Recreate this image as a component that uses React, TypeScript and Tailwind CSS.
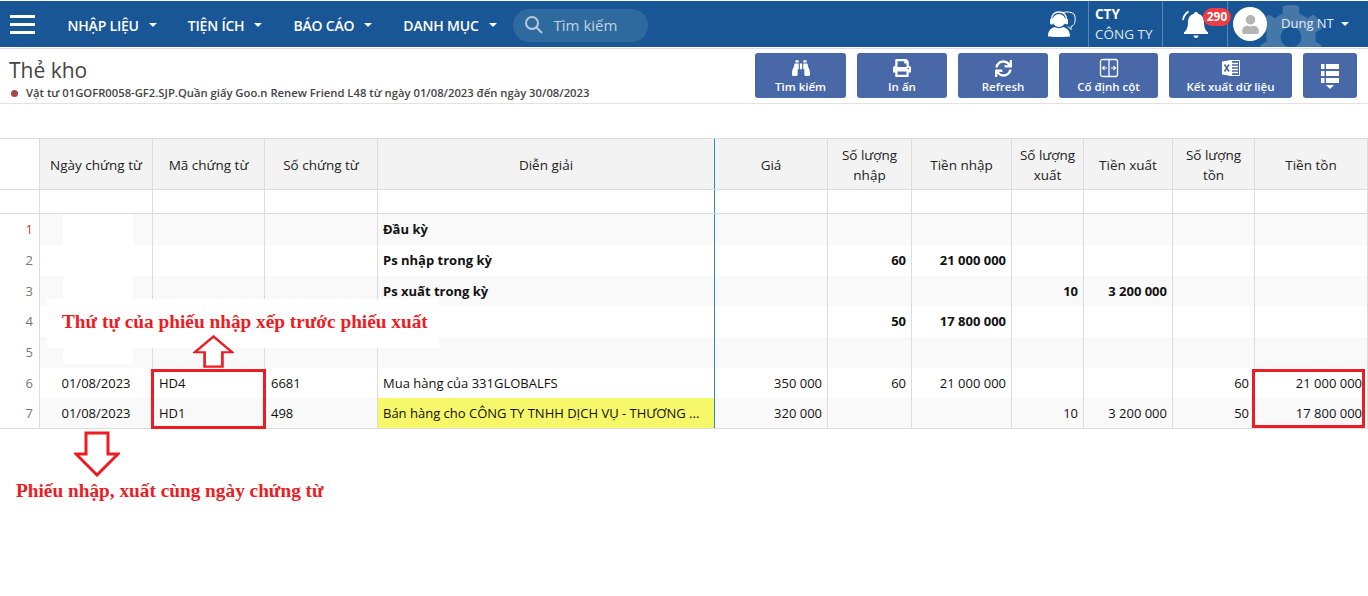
import { FaBinoculars, FaPrint, FaSync, FaCog, FaUser } from "react-icons/fa";

const COLS =
  "grid grid-cols-[40px_113px_112px_113px_337px_113px_84px_100px_72px_89px_82px_113px]";

const NAV = ["NHẬP LIỆU", "TIỆN ÍCH", "BÁO CÁO", "DANH MỤC"];

const ACTIONS = [
  { label: "Tìm kiếm", icon: <FaBinoculars size={18} />, w: "w-[91px]" },
  { label: "In ấn", icon: <FaPrint size={18} />, w: "w-[90px]" },
  { label: "Refresh", icon: <FaSync size={17} />, w: "w-[90px]" },
  { label: "Cố định cột", icon: <ColumnsIcon />, w: "w-[99px]" },
  { label: "Kết xuất dữ liệu", icon: <ExcelIcon />, w: "w-[123px]" },
];

const HEADERS = [
  "",
  "Ngày chứng từ",
  "Mã chứng từ",
  "Số chứng từ",
  "Diễn giải",
  "Giá",
  "Số lượng nhập",
  "Tiền nhập",
  "Số lượng xuất",
  "Tiền xuất",
  "Số lượng tồn",
  "Tiền tồn",
];

type Row = { h: string; bold?: boolean; cells: string[] };

const ROWS: Row[] = [
  { h: "h-[31px]", bold: true, cells: ["", "", "", "Đầu kỳ", "", "", "", "", "", "", ""] },
  { h: "h-[31px]", bold: true, cells: ["", "", "", "Ps nhập trong kỳ", "", "60", "21 000 000", "", "", "", ""] },
  { h: "h-[30px]", bold: true, cells: ["", "", "", "Ps xuất trong kỳ", "", "", "", "10", "3 200 000", "", ""] },
  { h: "h-[31px]", bold: true, cells: ["", "", "", "", "", "50", "17 800 000", "", "", "", ""] },
  { h: "h-[31px]", cells: ["", "", "", "", "", "", "", "", "", "", ""] },
  { h: "h-[30px]", cells: ["01/08/2023", "HD4", "6681", "Mua hàng của 331GLOBALFS", "350 000", "60", "21 000 000", "", "", "60", "21 000 000"] },
  { h: "h-[30px]", cells: ["01/08/2023", "HD1", "498", "Bán hàng cho CÔNG TY TNHH DỊCH VỤ - THƯƠNG ...", "320 000", "", "", "10", "3 200 000", "50", "17 800 000"] },
];

function ColumnsIcon() {
  return (
    <svg width="20" height="20" viewBox="0 0 20 20" fill="none" stroke="currentColor">
      <rect x="1.500" y="1.500" width="17" height="17" rx="2" strokeWidth="1.300" />
      <path d="M10 1v18" strokeWidth="1.300" />
      <path d="M3.500 10h4.500M5.500 8l-2 2 2 2M16.500 10H12M14.500 8l2 2-2 2" strokeWidth="1.100" />
    </svg>
  );
}

function ExcelIcon() {
  return (
    <svg width="18" height="18" viewBox="0 0 18 18">
      <path d="M7 1.500h10.500v15H7z" fill="none" stroke="white" />
      <path d="M10 4.500h6M10 7.500h6M10 10.500h6M10 13.500h6" stroke="white" strokeWidth="1.500" />
      <path d="M0 2.500 10 1v16L0 15.500z" fill="white" />
      <path d="M2.500 5.500 7 12.500M7 5.500 2.500 12.500" stroke="#4868a7" strokeWidth="1.600" />
    </svg>
  );
}

function ListIcon() {
  return (
    <svg width="18" height="20" viewBox="0 0 18 20" fill="white">
      <rect x="0" y="0" width="3.500" height="5" />
      <rect x="5" y="0" width="13" height="5" />
      <rect x="0" y="7" width="3.500" height="5" />
      <rect x="5" y="7" width="13" height="5" />
      <rect x="0" y="14" width="3.500" height="5" />
      <rect x="5" y="14" width="13" height="5" />
    </svg>
  );
}

function HeadsetIcon() {
  return (
    <svg width="28" height="26" viewBox="0 0 28 26">
      <path
        d="M15 1.500c4-1 9-.5 11 1.500 1.500 2 1.500 7 .5 9.500-.7 1.600-2 2.500-3.500 3v3l-3-3"
        fill="none"
        stroke="white"
        strokeWidth="1"
      />
      <circle cx="11" cy="9.500" r="6.500" fill="white" />
      <path d="M3.500 9C3.500 4 6.500 1 11 1s7.500 3 7.500 8" fill="none" stroke="white" strokeWidth="1.500" />
      <rect x="2" y="7.500" width="3.500" height="6" rx="1.500" fill="white" />
      <rect x="16.500" y="7.500" width="3.500" height="6" rx="1.500" fill="white" />
      <path d="M18 13c0 2-2 3.500-5 3.500" fill="none" stroke="#195695" strokeWidth="1" />
      <path d="M0 25.500c0-5 2-8 6.500-9.500 2.500 1.500 6.500 1.500 9 0 4.500 1.500 6.500 4.500 6.500 9.500-6 .7-16 .7-22 0z" fill="white" />
    </svg>
  );
}

function BellIcon() {
  return (
    <svg width="26" height="28" viewBox="0 0 26 28" fill="white">
      <path d="M14 2c1.200 0 2 .8 2 1.800 3.800 1 6 4 6 8.200 0 5 1 7.500 4 10.500v1.500H2v-1.500c3-3 4-5.500 4-10.500 0-4.200 2.200-7.200 6-8.200C12 2.800 12.800 2 14 2z" />
      <path d="M11.500 25.500h5c0 1.500-1 2.500-2.500 2.500s-2.500-1-2.500-2.500z" />
      <path d="M6.500 1.500C3.500 3.500 1.500 6.500 1 10" fill="none" stroke="white" strokeWidth="1.800" />
    </svg>
  );
}

function Caret({ className }: { className: string }) {
  return <span className={`inline-block border-x-[4px] border-t-[4px] border-x-transparent ${className}`} />;
}

function Arrow({ points, className }: { points: string; className: string }) {
  return (
    <svg className={className} viewBox="0 0 46 46" preserveAspectRatio="none">
      <polygon points={points} fill="white" stroke="#ed1c24" strokeWidth="3" />
    </svg>
  );
}

export default function App() {
  return (
    <div className="relative w-[1368px] h-[596px] overflow-hidden bg-white font-['Open_Sans',sans-serif] text-[13px] text-[#222]">
      {/* Top bar */}
      <header className="relative mt-px flex h-[46px] items-center overflow-hidden bg-[#195695] text-white">
        <div className="ml-[10px] flex w-[25px] flex-col gap-[5px]">
          <span className="h-[3px] bg-white" />
          <span className="h-[3px] bg-white" />
          <span className="h-[3px] bg-white" />
        </div>
        <nav className="ml-[32.500px] flex gap-[31px] pt-[2px]">
          {NAV.map((item) => (
            <div key={item} className="flex items-center gap-[10px] text-[14px] font-semibold tracking-[-0.2px]">
              {item}
              <Caret className="border-t-white" />
            </div>
          ))}
        </nav>
        <div className="ml-[16px] mt-[2px] flex h-[33px] w-[135px] items-center gap-[10px] rounded-full bg-[#2f6a9f] pl-[11px] text-[15px] text-[#c3d3e2]">
          <svg width="20" height="20" viewBox="0 0 20 20" fill="none" stroke="#b9cadb" strokeWidth="2">
            <circle cx="8" cy="8" r="6" />
            <path d="M12.500 12.500 18 18" />
          </svg>
          Tìm kiếm
        </div>
        <div className="ml-auto flex h-full items-center">
          <div className="mr-[12px] w-[28px]">
            <HeadsetIcon />
          </div>
          <div className="flex h-full w-[74px] flex-col justify-center border-l border-[#5c87b3] pl-[6px] text-[13.500px] leading-[20px]">
            <span className="font-bold">CTY</span>
            <span className="text-[#dfe8f1]">CÔNG TY</span>
          </div>
          <div className="relative flex h-full w-[65px] items-center border-l border-[#5c87b3] pl-[19px]">
            <BellIcon />
          </div>
          <div className="relative flex h-full w-[141px] items-center border-l border-[#5c87b3] pl-[5px]">
            <FaCog size={66} className="absolute left-[30px] top-[3px] text-[#4677a9]" />
            <span className="relative flex h-[34px] w-[34px] items-end justify-center overflow-hidden rounded-full bg-white pb-[7px] text-[#b4b4b4]">
              <FaUser size={19} />
            </span>
            <span className="relative ml-[14px] text-[13px] text-[#e4ecf4]">Dung NT</span>
            <Caret className="relative ml-[7px] border-t-white" />
          </div>
          <span className="absolute left-[1203px] top-[7px] flex h-[18px] w-[28px] items-center justify-center rounded-full bg-[#ef3b43] text-[12px] font-bold">
            290
          </span>
        </div>
      </header>

      {/* Title and actions */}
      <section className="mt-px flex h-[56px] items-start border-b border-[#e2e2e2] border-t border-t-[#dcdcdc]">
        <div className="pl-[9px] pt-[8px]">
          <h1 className="text-[21px] leading-[27px] text-[#444]">Thẻ kho</h1>
          <p className="mt-px flex items-center gap-[8px] pl-[2px] text-[11.250px] font-semibold leading-[16px] text-[#444]">
            <span className="h-[7px] w-[7px] rounded-full bg-[#a94442]" />
            Vật tư 01GOFR0058-GF2.SJP.Quần giấy Goo.n Renew Friend L48 từ ngày 01/08/2023 đến ngày 30/08/2023
          </p>
        </div>
        <div className="ml-auto mr-[11px] mt-[4px] flex gap-[11px]">
          {ACTIONS.map(({ label, icon, w }) => (
            <button
              key={label}
              className={`flex h-[45px] flex-col items-center rounded-[3px] bg-[#4868a7] pt-[5px] text-[11.500px] font-semibold leading-[15px] text-white ${w}`}
            >
              <span className="flex h-[20px] items-center">{icon}</span>
              <span className="mt-[1px]">{label}</span>
            </button>
          ))}
          <button className="flex h-[45px] w-[54px] flex-col items-center rounded-[3px] bg-[#4868a7] pt-[11px] text-white">
            <ListIcon />
            <Caret className="mt-px border-t-white" />
          </button>
        </div>
      </section>

      {/* Grid */}
      <div className="mt-[34px] w-[1368px] border-t border-[#dcdcdc]">
        <div className={`${COLS} h-[51px] border-b border-[#dcdcdc]`}>
          {HEADERS.map((h, i) => (
            <div
              key={i}
              className={`flex items-center justify-center border-r px-[6px] pt-px text-center text-[13.500px] leading-[20px] ${i === 0 ? "" : "bg-[#f3f3f3]"} ${i === 4 ? "border-[#2b8cc4]" : "border-[#dcdcdc]"}`}
            >
              {h}
            </div>
          ))}
        </div>
        <div className={`${COLS} h-[24px] border-b border-[#dcdcdc]`}>
          {HEADERS.map((_, i) => (
            <div key={i} className={`border-r ${i === 4 ? "border-[#2b8cc4]" : "border-[#dcdcdc]"}`} />
          ))}
        </div>
        {ROWS.map((row, r) => (
          <div key={r} className={`${COLS} ${row.h}`}>
            <div className="flex items-center justify-end border-r border-[#dcdcdc] pr-[6px] pt-px text-[13px] text-[#777]">
              <span className={r === 0 ? "text-[#c0392b]" : ""}>{r + 1}</span>
            </div>
            {row.cells.map((c, i) => {
              const yellow = c.startsWith("Bán hàng");
              const right = i >= 4;
              const center = i === 0;
              const bg = yellow ? "bg-[#f7f76a]" : r % 2 === 0 ? "bg-[#f9f9f9]" : "bg-white";
              return (
                <div
                  key={i}
                  className={`flex min-w-0 items-center whitespace-nowrap border-r pt-px text-[13px] text-[#111] ${i === 1 || i === 2 ? "px-[6px]" : "px-[5px]"} ${bg} ${right ? "justify-end" : center ? "justify-center" : ""} ${row.bold ? "font-bold" : ""} ${i === 3 ? "border-[#2b8cc4]" : "border-[#dcdcdc]"}`}
                >
                  {c}
                </div>
              );
            })}
          </div>
        ))}
        <div className="h-px bg-[#dcdcdc]" />
      </div>

      {/* Annotations drawn over the grid */}
      <div className="absolute left-[63px] top-[214px] h-[86px] w-[70px] bg-white" />
      <div className="absolute left-[63px] top-[345px] h-[19px] w-[70px] bg-white" />
      <div className="absolute left-[47px] top-[299px] flex h-[49px] w-[392px] items-start bg-white pl-[15px] pt-[12px] font-['Liberation_Serif',serif] text-[19.300px] font-bold leading-[22px] text-[#ed1c24]">
        Thứ tự của phiếu nhập xếp trước phiếu xuất
      </div>
      <div className="absolute left-[151px] top-[369px] h-[60px] w-[115px] border-[3px] border-[#ed1c24]" />
      <div className="absolute left-[1252px] top-[369px] h-[59px] w-[113px] border-[3px] border-[#ed1c24]" />
      <Arrow
        className="absolute left-[193px] top-[335px] h-[33px] w-[41px]"
        points="23,2 44,24 33,24 33,44 13,44 13,24 2,24"
      />
      <Arrow
        className="absolute left-[74px] top-[431px] h-[46px] w-[46px]"
        points="12,2 34,2 34,23 44,23 23,44 2,23 12,23"
      />
      <div className="absolute left-[16px] top-[480px] font-['Liberation_Serif',serif] text-[19.300px] font-bold leading-[22px] text-[#ed1c24]">
        Phiếu nhập, xuất cùng ngày chứng từ
      </div>
    </div>
  );
}
